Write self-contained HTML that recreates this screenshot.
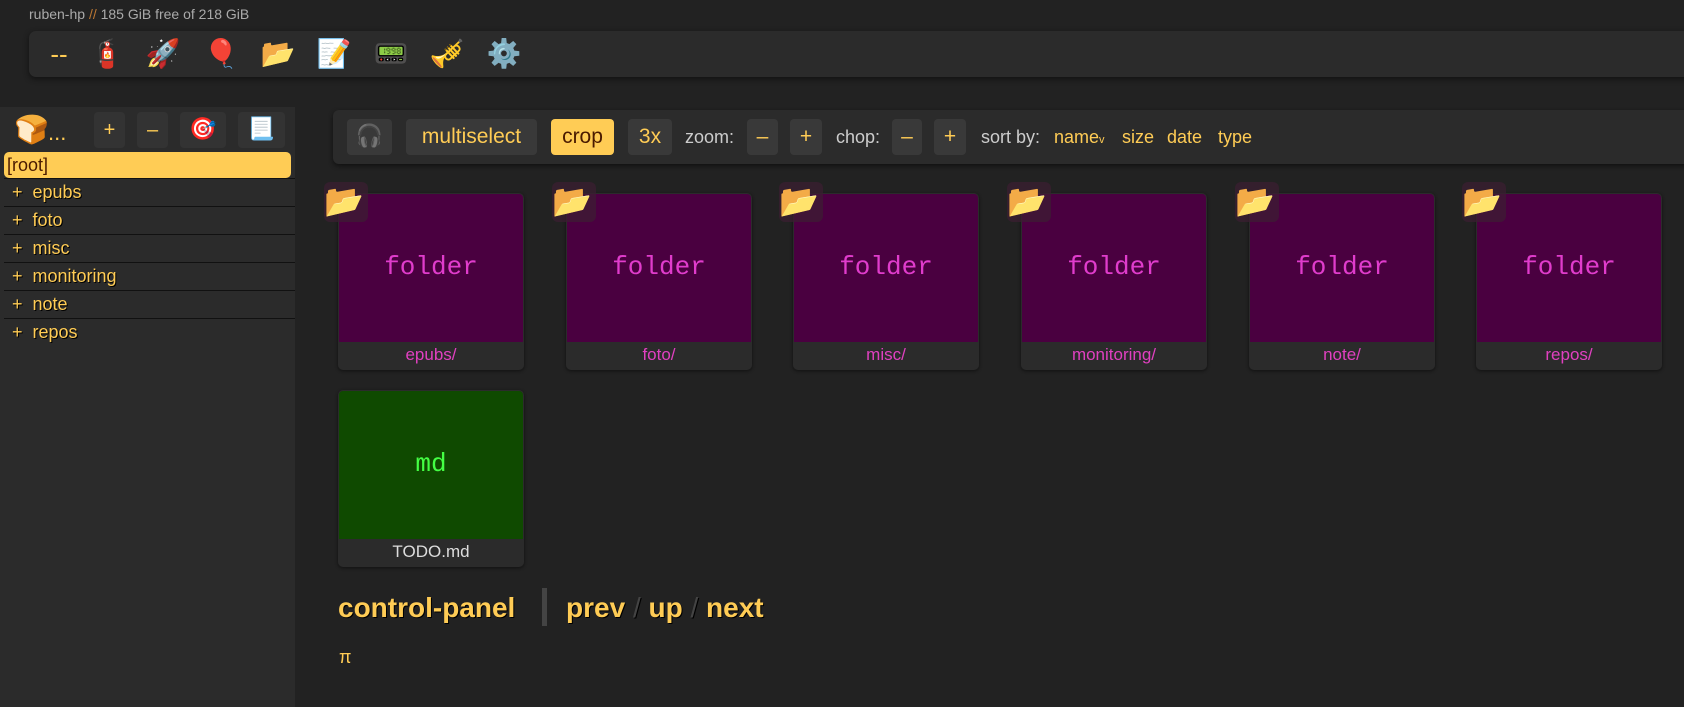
<!DOCTYPE html>
<html><head><meta charset="utf-8"><style>
*{box-sizing:border-box;margin:0;padding:0}
body{width:1684px;height:701px;background:#222;overflow:hidden;position:relative;font-family:"Liberation Sans","DejaVu Sans",sans-serif;color:#fc5}
.abs{position:absolute}
#hdr{left:29px;top:6px;font-size:14px;color:#aaa}
#hdr span{color:#b73}
#top{left:29px;top:31px;width:1700px;height:46px;background:#2b2b2b;border-radius:7px;box-shadow:0 2px 6px #111}
.ic{position:absolute;top:6px;width:40px;text-align:center;font-size:28px;line-height:34px;font-family:"Noto Color Emoji","DejaVu Sans",sans-serif}
#side{left:0;top:107px;width:295px;height:600px;background:#2b2b2b}
.sb{position:absolute;top:5px;height:36px;background:#333;border-radius:4px;text-align:center;line-height:36px;font-size:20px}
.row{position:absolute;left:4px;width:291px;height:28px;border-top:1px solid #111;font-size:18px;line-height:27px;padding-left:8px;text-shadow:1px 1px 0 #000}
#main{left:333px;top:110px;width:1400px;height:54px;background:#2b2b2b;border-radius:6px;box-shadow:0 2px 5px #111}
.b{position:absolute;top:9px;height:36px;background:#393939;border-radius:4px;text-align:center;line-height:36px;font-size:21px;color:#fc5}
.l{position:absolute;top:9px;line-height:36px;font-size:18px;color:#ccc}
.s{position:absolute;top:9px;line-height:36px;font-size:18px;color:#fc5}
.t{position:absolute;width:186px;height:177px;background:#2b2b2b;border-radius:5px;box-shadow:0 1px 3px #111}
.t .p{position:absolute;left:1px;top:1px;right:1px;height:148px;background:#4a0040;border-radius:4px 4px 0 0;text-align:center;line-height:146px;font-family:"Liberation Mono",monospace;font-size:26px;color:#e03ccc}
.t .n{position:absolute;left:0;right:0;top:148px;text-align:center;line-height:28px;font-size:17px;color:#e040c0}
.f{position:absolute;width:44px;height:40px;background:rgba(60,30,50,.7);border-radius:6px;font-size:32px;line-height:38px;font-family:"Noto Color Emoji","DejaVu Sans",sans-serif}
</style></head><body>
<div id="hdr" class="abs">ruben-hp <span>//</span> 185 GiB free of 218 GiB</div>
<div id="top" class="abs">
<div class="ic" style="left:10px;color:#fc5;font-family:'Liberation Sans';font-size:26px">--</div>
<div class="ic" style="left:58px">🧯</div>
<div class="ic" style="left:114px">🚀</div>
<div class="ic" style="left:172px">🎈</div>
<div class="ic" style="left:229px">📂</div>
<div class="ic" style="left:285px">📝</div>
<div class="ic" style="left:342px">📟</div>
<div class="ic" style="left:398px">🎺</div>
<div class="ic" style="left:455px">⚙️</div>
</div>
<div id="side" class="abs">
<div class="abs" style="left:14px;top:5px;font-size:28px;line-height:36px;font-family:'Noto Color Emoji',sans-serif">🍞</div>
<div class="abs" style="left:48px;top:8px;font-size:22px;line-height:36px;color:#fc5">...</div>
<div class="sb" style="left:94px;width:31px">+</div>
<div class="sb" style="left:137px;width:31px">–</div>
<div class="sb" style="left:180px;width:46px;font-family:'Noto Color Emoji',sans-serif;font-size:22px">🎯</div>
<div class="sb" style="left:238px;width:47px;font-family:'Noto Color Emoji',sans-serif;font-size:22px">📃</div>
<div class="abs" style="left:4px;top:45px;width:287px;height:26px;background:#fc5;border-radius:5px;color:#4a1a00;font-size:18px;line-height:26px;padding-left:3px">[root]</div>
<div class="row" style="top:71px">+&nbsp;&nbsp;epubs</div>
<div class="row" style="top:99px">+&nbsp;&nbsp;foto</div>
<div class="row" style="top:127px">+&nbsp;&nbsp;misc</div>
<div class="row" style="top:155px">+&nbsp;&nbsp;monitoring</div>
<div class="row" style="top:183px">+&nbsp;&nbsp;note</div>
<div class="row" style="top:211px">+&nbsp;&nbsp;repos</div>
</div>
<div id="main" class="abs">
<div class="b" style="left:14px;width:45px;font-family:'Noto Color Emoji',sans-serif;font-size:22px">🎧</div>
<div class="b" style="left:73px;width:131px">multiselect</div>
<div class="b" style="left:218px;width:63px;background:#fc5;color:#4a1a00">crop</div>
<div class="b" style="left:295px;width:44px">3x</div>
<div class="l" style="left:352px">zoom:</div>
<div class="b" style="left:414px;width:31px">–</div>
<div class="b" style="left:457px;width:32px">+</div>
<div class="l" style="left:503px">chop:</div>
<div class="b" style="left:559px;width:30px">–</div>
<div class="b" style="left:601px;width:32px">+</div>
<div class="l" style="left:648px">sort by:</div>
<div class="s" style="left:721px">name<span style="font-size:11px">v</span></div>
<div class="s" style="left:789px">size</div>
<div class="s" style="left:834px">date</div>
<div class="s" style="left:885px">type</div>
</div>

<div class="t" style="left:338px;top:193px"><div class="p">folder</div><div class="n">epubs/</div></div>
<div class="t" style="left:566px;top:193px"><div class="p">folder</div><div class="n">foto/</div></div>
<div class="t" style="left:793px;top:193px"><div class="p">folder</div><div class="n">misc/</div></div>
<div class="t" style="left:1021px;top:193px"><div class="p">folder</div><div class="n">monitoring/</div></div>
<div class="t" style="left:1249px;top:193px"><div class="p">folder</div><div class="n">note/</div></div>
<div class="t" style="left:1476px;top:193px"><div class="p">folder</div><div class="n">repos/</div></div>
<div class="f" style="left:324px;top:182px">📂</div>
<div class="f" style="left:552px;top:182px">📂</div>
<div class="f" style="left:779px;top:182px">📂</div>
<div class="f" style="left:1007px;top:182px">📂</div>
<div class="f" style="left:1235px;top:182px">📂</div>
<div class="f" style="left:1462px;top:182px">📂</div>

<div class="t" style="left:338px;top:390px"><div class="p" style="background:#0f4a00;color:#4f4;">md</div><div class="n" style="color:#ddd">TODO.md</div></div>

<div class="abs" style="left:338px;top:590px;font-size:28px;font-weight:bold;line-height:36px;text-shadow:1px 1px 0 #000">control-panel</div>
<div class="abs" style="left:542px;top:588px;width:5px;height:38px;background:#444"></div>
<div class="abs" style="left:566px;top:590px;font-size:28px;font-weight:bold;line-height:36px;text-shadow:1px 1px 0 #000">prev <span style="color:#444;font-weight:normal">/</span> up <span style="color:#444;font-weight:normal">/</span> next</div>
<div class="abs" style="left:339px;top:647px;font-size:18px">π</div>
</body></html>
